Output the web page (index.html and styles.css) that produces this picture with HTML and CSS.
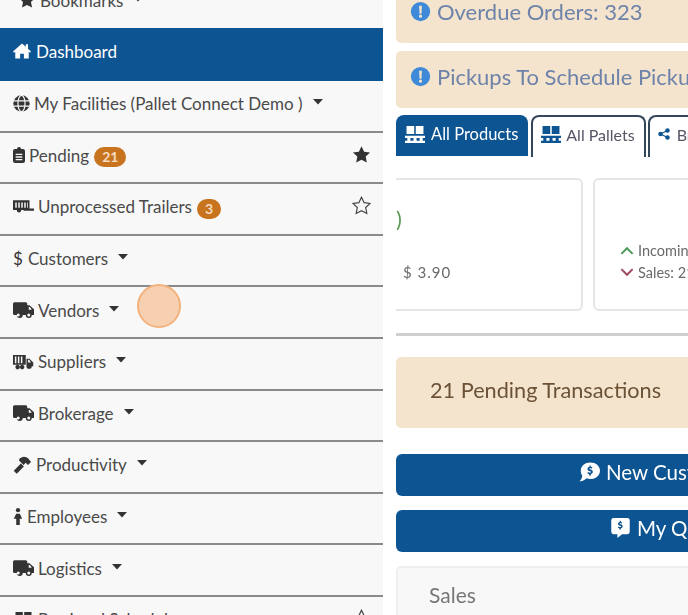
FILE: index.html
```html
<!DOCTYPE html>
<html lang="en">
<head>
  <meta charset="UTF-8" />
  <title>Dashboard</title>
  <link rel="stylesheet" href="styles.css">
</head>
<body>

<svg class="defs" width="0" height="0">
  <symbol id="i-star" viewBox="0 0 24 24"><path d="M12 1.500l3.300 6.900 7.500 1-5.500 5.200 1.400 7.500L12 18.500l-6.700 3.600 1.400-7.500L1.200 9.400l7.500-1z"/></symbol>
  <symbol id="i-home" viewBox="0 0 24 24"><path d="M12 2L0 12.500l1.500 1.700L3 13v9h6.500v-6.500h5V22H21v-9l1.500 1.200 1.500-1.700-4-3.500V3h-3v3.300z"/></symbol>
  <symbol id="i-globe" viewBox="0 0 24 24"><circle cx="12" cy="12" r="11.500"/><g fill="none" stroke="#f8f8f8" stroke-width="1.700"><ellipse cx="12" cy="12" rx="5" ry="11.500"/><path d="M1 8.200h22M1 15.800h22"/></g></symbol>
  <symbol id="i-clip" viewBox="0 0 18 24"><path fill-rule="evenodd" d="M9 0a3 3 0 0 1 3 3h3a3 3 0 0 1 3 3v15a3 3 0 0 1-3 3H3a3 3 0 0 1-3-3V6a3 3 0 0 1 3-3h3a3 3 0 0 1 3-3zM4 10v2h10v-2zm0 4v2h10v-2zm0 4v2h10v-2z"/></symbol>
  <symbol id="i-trailer" viewBox="0 0 28 20"><path fill-rule="evenodd" d="M0 1h22v11h6v3H14v-1h-3a3 3 0 0 1-6 0H0zm3 3v7h2V4zm4 0v7h2V4zm4 0v7h2V4zm4 0v7h2V4zm4 0v7h1V4z"/><circle cx="8" cy="15" r="2.200"/></symbol>
  <symbol id="i-truck" viewBox="0 0 28 21"><path fill-rule="evenodd" d="M2 0h15a2 2 0 0 1 2 2v2h3l6 5.500V15v2h-3a4 4 0 0 1-8 0h-4a4 4 0 0 1-8 0H2a2 2 0 0 1-2-2V2a2 2 0 0 1 2-2zm19 6.500V10h4l-2.500-3.500zM7 15a2 2 0 1 0 0 4 2 2 0 0 0 0-4zm14 0a2 2 0 1 0 0 4 2 2 0 0 0 0-4z"/></symbol>
  <symbol id="i-supply" viewBox="0 0 28 21"><path fill-rule="evenodd" d="M0 1h17v13H0zm2.500 2v9h2V3zm4 0v9h2V3zm4 0v9h2V3zM18 6h4l5 5v5h-2a3.500 3.500 0 0 1-7 0zm2 1.500V11h4l-2.500-3.500zM5 14.500a3 3 0 1 1 0 5.500 3 3 0 0 1 0-5.500zM11 14.500a3 3 0 1 1 0 5.500 3 3 0 0 1 0-5.500z"/></symbol>
  <symbol id="i-hammer" viewBox="0 0 24 24"><path d="M9 3l5-2c3 0 5 1 7 3l3 4-4 4-3-3-3 3-6-6zM1 19.500L10.500 10l4 4L5 23.500z"/></symbol>
  <symbol id="i-person" viewBox="0 0 12 24"><circle cx="6" cy="3" r="3"/><path d="M0 15l3.500-7h5l3.500 7H8.500v9h-5v-9z"/></symbol>
  <symbol id="i-caret" viewBox="0 0 10 6"><path d="M0 0h10L5 5.500z"/></symbol>
  <symbol id="i-alert" viewBox="0 0 24 24"><path fill-rule="evenodd" d="M12 1a11 11 0 1 0 0 22 11 11 0 0 0 0-22zm-1.600 4.500h3.200l-.5 9h-2.200zM12 15.500a1.800 1.800 0 1 1 0 3.600 1.800 1.800 0 0 1 0-3.600z"/></symbol>
  <symbol id="i-pallet" viewBox="0 0 26 22"><path d="M2 0h10v10.500H2zM14 0h10v10.500H14zM0 12.500h26v3H0zM0 19h26v3H0zM3 15h4v4H3zM11 15h4v4h-4zM19 15h4v4h-4z"/></symbol>
  <symbol id="i-share" viewBox="0 0 24 24"><circle cx="19" cy="5" r="4.500"/><circle cx="19" cy="19" r="4.500"/><circle cx="5" cy="12" r="4.500"/><path d="M5 12L19 5M5 12l14 7" stroke="currentColor" stroke-width="2.500"/></symbol>
  <symbol id="i-chat" viewBox="0 0 24 22"><path fill-rule="evenodd" d="M13 0c6 0 11 4 11 9.500S19 19 13 19c-1.500 0-3-.3-4.300-.8C7 20 3.500 22 .5 21.500 2.500 20 3.500 17.500 3.700 15 2.600 13.500 2 11.500 2 9.500 2 4 7 0 13 0zm-1 3.500v1.600c-1.500.3-2.300 1.200-2.300 2.400 0 1.500 1.100 2.100 2.700 2.500 1 .3 1.400.5 1.400.9 0 .5-.6.700-1.300.7-.8 0-1.600-.2-2.300-.7l-.7 1.500c.6.400 1.300.7 2 .8v1.700h2v-1.700c1.500-.3 2.300-1.300 2.300-2.500 0-1.500-1-2.200-2.700-2.600-1-.3-1.400-.5-1.400-.8 0-.4.400-.6 1.100-.6.700 0 1.300.2 1.900.5l.6-1.500c-.5-.3-1.100-.5-1.800-.6V3.500z"/></symbol>
  <symbol id="i-note" viewBox="0 0 24 26"><path fill-rule="evenodd" d="M3 0h18a3 3 0 0 1 3 3v15a3 3 0 0 1-3 3h-7l-6 5v-5H3a3 3 0 0 1-3-3V3a3 3 0 0 1 3-3zm8 3.500v1.600c-1.500.3-2.300 1.200-2.300 2.400 0 1.500 1.100 2.100 2.700 2.500 1 .3 1.400.5 1.400.9 0 .5-.6.700-1.300.7-.8 0-1.600-.2-2.300-.7l-.7 1.500c.6.400 1.300.7 2 .8v1.700h2v-1.700c1.500-.3 2.300-1.300 2.300-2.500 0-1.500-1-2.200-2.700-2.600-1-.3-1.400-.5-1.400-.8 0-.4.400-.6 1.100-.6.700 0 1.300.2 1.900.5l.6-1.500c-.5-.3-1.100-.5-1.800-.6V3.500z"/></symbol>
</svg>

<div class="page">
  <nav class="sidebar">
    <a class="nav-item nav-bookmarks"><svg class="ico ico-star"><use href="#i-star"/></svg>Bookmarks<svg class="caret"><use href="#i-caret"/></svg></a>
    <a class="nav-item active"><svg class="ico ico-home"><use href="#i-home"/></svg>Dashboard</a>
    <a class="nav-item"><svg class="ico ico-globe"><use href="#i-globe"/></svg>My Facilities (Pallet Connect Demo )<svg class="caret"><use href="#i-caret"/></svg></a>
    <a class="nav-item"><svg class="ico ico-clip"><use href="#i-clip"/></svg>Pending<span class="badge">21</span><svg class="fav"><use href="#i-star"/></svg></a>
    <a class="nav-item"><svg class="ico ico-wide"><use href="#i-trailer"/></svg>Unprocessed Trailers<span class="badge">3</span><svg class="fav fav-off"><use href="#i-star"/></svg></a>
    <a class="nav-item"><span class="ico-text">$</span>Customers<svg class="caret"><use href="#i-caret"/></svg></a>
    <a class="nav-item"><svg class="ico ico-wide"><use href="#i-truck"/></svg>Vendors<svg class="caret"><use href="#i-caret"/></svg></a>
    <a class="nav-item"><svg class="ico ico-wide"><use href="#i-supply"/></svg>Suppliers<svg class="caret"><use href="#i-caret"/></svg></a>
    <a class="nav-item"><svg class="ico ico-wide"><use href="#i-truck"/></svg>Brokerage<svg class="caret"><use href="#i-caret"/></svg></a>
    <a class="nav-item"><svg class="ico ico-hammer"><use href="#i-hammer"/></svg>Productivity<svg class="caret"><use href="#i-caret"/></svg></a>
    <a class="nav-item"><svg class="ico ico-person"><use href="#i-person"/></svg>Employees<svg class="caret"><use href="#i-caret"/></svg></a>
    <a class="nav-item"><svg class="ico ico-wide"><use href="#i-truck"/></svg>Logistics<svg class="caret"><use href="#i-caret"/></svg></a>
    <a class="nav-item"><svg class="ico ico-wide"><use href="#i-pallet"/></svg>Pre-Load Schedule<svg class="fav fav-off"><use href="#i-star"/></svg></a>
  </nav>

  <main class="main">
    <div class="alert"><svg class="alert-ico"><use href="#i-alert"/></svg>Overdue Orders: 323</div>
    <div class="alert"><svg class="alert-ico"><use href="#i-alert"/></svg>Pickups To Schedule Pickups: 12</div>

    <div class="tabs">
      <a class="tab tab-active"><svg class="tab-ico"><use href="#i-pallet"/></svg>All Products</a>
      <a class="tab"><svg class="tab-ico"><use href="#i-pallet"/></svg>All Pallets</a>
      <a class="tab"><svg class="tab-ico-sm"><use href="#i-share"/></svg>Brokerage</a>
    </div>

    <div class="cards">
      <div class="card card-first">
        <div class="paren">)</div>
        <div class="price">$ 3.90</div>
      </div>
      <div class="card card-second">
        <div class="stat"><svg class="chev chev-up" viewBox="0 0 12 8"><path d="M1 7l5-5 5 5"/></svg>Incoming: 24</div>
        <div class="stat"><svg class="chev chev-down" viewBox="0 0 12 8"><path d="M1 1l5 5 5-5"/></svg>Sales: 21</div>
      </div>
    </div>

    <hr class="rule">

    <div class="alert alert-pending">21 Pending Transactions</div>

    <a class="btn btn-first"><svg class="btn-ico"><use href="#i-chat"/></svg>New Customer Quote</a>
    <a class="btn"><svg class="btn-ico"><use href="#i-note"/></svg>My Quotations</a>

    <div class="panel">Sales</div>
  </main>
</div>

<div class="touch"></div>

</body>
</html>
```

FILE: styles.css
```css
html, body {
  margin: 0;
  padding: 0;
  height: 615px;
  overflow: hidden;
  background-color: white;
  font-family: 'Lato', sans-serif;
}

.defs {
  position: absolute;
}

/* both columns are scrolled a little, so their tops are cut by the window */
.page {
  display: flex;
  align-items: flex-start;
  gap: 13px;
  height: 615px;
  overflow: hidden;
  filter: blur(0.35px);
}

/* sidebar */
.sidebar {
  flex: 0 0 383px;
  margin-top: -24px;
  background-color: #f8f8f8;
  color: #4a4a4a;
  font-size: 17px;
  height: 639px;
  overflow: hidden;
}

.nav-item {
  display: flex;
  align-items: center;
  box-sizing: content-box;
  height: 45.6px;
  padding: 0 12px 4px 13px;
  border-bottom: 2px solid #8a8a8a;
  white-space: nowrap;
}

.nav-bookmarks {
  height: 48px;
  border-bottom: none;
  padding-left: 18px;
}

.nav-item.active {
  background-color: #0c5492;
  color: white;
  height: 46px;
  padding-bottom: 7px;
  border-bottom: none;
}

.ico {
  fill: #333;
  margin-right: 4px;
  flex: none;
}

.active .ico {
  fill: white;
}

.ico-star { width: 18px; height: 18px; }
.ico-home { width: 20px; height: 18px; margin-left: -1px; }
.ico-globe { width: 17px; height: 17px; }
.ico-clip { width: 12px; height: 16px; }
.ico-wide { width: 21px; height: 16px; }
.ico-hammer { width: 20px; height: 18px; margin-left: -1px; }
.ico-person { width: 10px; height: 17px; }

.ico-text {
  color: #333;
  margin-right: 5px;
}

.caret {
  width: 10px;
  height: 6px;
  fill: #333;
  margin-left: 10px;
  margin-top: -3px;
}

.badge {
  background-color: #c8741f;
  color: #f5dcc0;
  font-size: 14px;
  font-weight: bold;
  line-height: 20px;
  padding: 0 8px;
  border-radius: 10px;
  margin-left: 5px;
  margin-top: 4px;
}

.fav {
  width: 19px;
  height: 19px;
  fill: #333;
  margin-left: auto;
  margin-right: 0;
  margin-top: -2px;
}

.fav-off {
  fill: none;
  stroke: #444;
  stroke-width: 1.5;
}

/* main column, wider than the window and clipped */
.main {
  flex: 0 0 590px;
  margin-top: -14px;
  color: #555;
}

.alert {
  display: flex;
  align-items: center;
  box-sizing: border-box;
  height: 57px;
  padding: 0 0 7px 14px;
  margin-bottom: 8px;
  background-color: #f5e4cd;
  color: #6d83aa;
  border-radius: 5px;
  font-size: 22px;
  white-space: nowrap;
}

.alert-ico {
  width: 21px;
  height: 21px;
  fill: #3f8ad8;
  margin-right: 6px;
  flex: none;
}

/* tabs */
.tabs {
  display: flex;
  gap: 3px;
  height: 42px;
  margin-top: -1px;
  margin-bottom: 21px;
}

.tab {
  display: flex;
  align-items: center;
  box-sizing: border-box;
  height: 42px;
  padding: 0 9px 6px 8px;
  border: 2px solid #33475a;
  border-bottom: none;
  border-radius: 8px 8px 0 0;
  color: #556;
  font-size: 16px;
  white-space: nowrap;
}

.tab + .tab + .tab {
  margin-left: -1px;
}

.tab-active {
  background-color: #0c5492;
  border: none;
  color: white;
  height: 41px;
  padding: 0 10px 3px 9px;
  font-size: 16.5px;
}

.tab-ico {
  width: 20px;
  height: 17px;
  fill: #0c5492;
  margin-right: 6px;
}

.tab:not(.tab-active) .tab-ico {
  margin-right: 5px;
}

.tab-active .tab-ico {
  fill: white;
}

.tab-ico-sm {
  width: 12px;
  height: 12px;
  fill: #0c5492;
  color: #0c5492;
  margin-right: 7px;
}

/* stat cards */
.cards {
  display: flex;
  gap: 10px;
  height: 133px;
  margin-bottom: 22px;
}

.card {
  box-sizing: border-box;
  border: 2px solid #e6e6e6;
  border-radius: 6px;
  background-color: white;
}

.card-first {
  width: 187px;
  border-left: none;
  border-radius: 0 6px 6px 0;
  padding: 25px 0 0 7px;
  font-size: 15px;
}

.paren {
  color: #5c9a55;
  font-size: 22px;
  line-height: 28px;
  margin-left: -7px;
}

.price {
  color: #6a6a6a;
  letter-spacing: 1px;
  line-height: 20px;
  margin-top: 29px;
}

.card-second {
  width: 200px;
  padding: 59px 0 0 25px;
  font-size: 14.5px;
  color: #6a6a6a;
}

.stat {
  display: flex;
  align-items: center;
  height: 22px;
  white-space: nowrap;
}

.chev {
  width: 14px;
  height: 9px;
  fill: none;
  stroke-width: 1.8;
  margin-right: 4px;
}

.chev-up { stroke: #4f9a5a; }
.chev-down { stroke: #a04a60; }

.rule {
  border: none;
  height: 3px;
  background-color: #cfcfcf;
  margin: 0 0 21px;
}

.alert.alert-pending {
  height: 71px;
  color: #6b5236;
  font-size: 21.7px;
  padding: 0 0 6px 34px;
  margin-bottom: 26px;
}

/* action buttons */
.btn {
  display: flex;
  align-items: center;
  justify-content: center;
  box-sizing: border-box;
  height: 42px;
  padding-bottom: 6px;
  background-color: #0c5492;
  color: white;
  font-size: 20.5px;
  border-radius: 6px;
  margin-bottom: 14px;
}

.btn-ico {
  width: 21px;
  height: 20px;
  fill: white;
  margin-right: 6px;
}

.panel {
  box-sizing: border-box;
  height: 80px;
  border: 2px solid #eee;
  border-radius: 5px;
  background-color: #f8f8f8;
  color: #777;
  font-size: 21px;
  padding: 14px 0 0 31px;
}

/* recorded tap marker */
.touch {
  position: absolute;
  left: 137px;
  top: 284px;
  width: 44px;
  height: 44px;
  box-sizing: border-box;
  border: 2px solid #f3b27c;
  border-radius: 50%;
  background-color: #f7d0b2;
}
```
